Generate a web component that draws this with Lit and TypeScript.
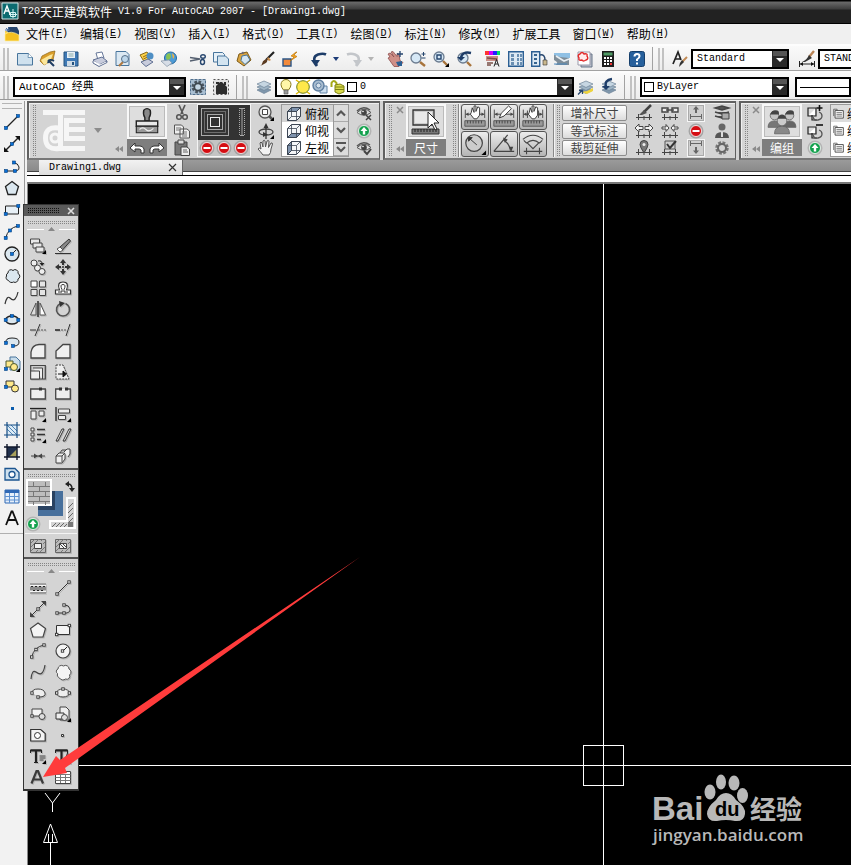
import { LitElement, html, svg, css, SVGTemplateResult, TemplateResult } from "lit";
import { customElement } from "lit/decorators.js";

/* ---------- icon drawing ---------- */

const node = (x: number, y: number) => svg`<rect x=${x - 1.5} y=${y - 1.5} width="3" height="3" fill="#0a6fd6" stroke="#04407e" stroke-width=".6"/>`;
const knob = (x: number, y: number) => svg`<rect x=${x - 1.2} y=${y - 1.2} width="2.4" height="2.4" fill="#fff" stroke="#333" stroke-width=".9"/>`;
const corner = svg`<path d="M16 12v4h-4z" fill="#000"/>`;
const cube = (face: string) => svg`<g stroke="#3c4654" fill="#f4f6f8" stroke-linejoin="round"><path d="M1.5 5.5l4-4h9v9l-4 4h-9z"/><path d=${face} fill="#7f93ad"/><path d="M1.5 5.5h9v9M10.5 5.5l4-4M5.5 1.5v9h9M5.5 10.5l-4 4" fill="none" stroke-width=".8"/></g>`;
const disc = (fill: string, ring: string, mark: SVGTemplateResult) => svg`<circle cx="8" cy="8" r="7.5" fill=${ring}/><circle cx="8" cy="8" r="5.5" fill=${fill} stroke="#fff" stroke-width=".8"/>${mark}`;
const stop = disc("#d40d12", "#a4a4a4", svg`<path d="M4.5 7h7v2h-7z" fill="#fff"/>`);
const up = disc("#12a04c", "#b4b4b4", svg`<path d="M8 4l3.5 4H9.2v3.5H6.8V8H4.5z" fill="#fff"/>`);
const lens = (x: number, y: number, r: number) => svg`<path d=${`M${x + r - 1} ${y + r - 1}L15 15`} stroke="#a8743c" stroke-width="2.4"/><circle cx=${x} cy=${y} r=${r} fill="#d6e8f6" stroke="#6c7c90" stroke-width="1.3"/>`;
const sheets = svg`<g stroke="#6d8296" stroke-width=".7"><path d="M1 11l7-2.5 7 2.5-7 3.5z" fill="#7f97ac"/><path d="M1 8l7-2.5L15 8l-7 3.5z" fill="#9fb5c6"/><path d="M1 5l7-3 7 3-7 3.5z" fill="#c6d6e2"/></g>`;
const eye = svg`<path d="M1 7.5Q8 1 15 7.5Q8 13 1 7.5z" fill="#ddd" stroke="#555"/><path d="M1 6Q7 0 14 5" fill="none" stroke="#555" stroke-width="1.5"/><circle cx="8" cy="7.5" r="2.8" fill="#444"/><circle cx="7" cy="6.5" r=".8" fill="#fff"/>`;
const dimBase = svg`<path d="M2.5 9v6M13.5 9v6M8 11v4M0 12.5h16" stroke="#444" fill="none"/>`;

const icons: Record<string, SVGTemplateResult> = {
  app: svg`<path d="M0 0h16v16H0z" fill="#0c6b70"/><path d="M0 0h16v16H0z" fill="none" stroke="#cfe8e8"/><path d="M2 11L5 3l3 8M3 8h4" fill="none" stroke="#fff" stroke-width="1.4"/><path d="M8.5 9.5h5v4h-5zM11 6v9M7 11.5h8" fill="none" stroke="#d6f4f4"/>`,
  doc: svg`<path d="M1 5h14v9H1z" fill="#fbd34d"/><path d="M4 1h9l2 4v9H4z" fill="#27466e"/><path d="M1 8q6-4 14 1v6H1z" fill="#f4c021" stroke="#fff0a0" stroke-width=".7"/><path d="M2 2l3 3M5 1L3 6M1 4h5" stroke="#4a6ea0"/>`,
  fresh: svg`<path d="M.5 2.5h11l4 4v7.5H.5z" fill="#cfe1ee" stroke="#48759c"/><path d="M11.5 2.5l-.5 4h4.5" fill="#fff" stroke="#48759c" stroke-width=".7"/>`,
  open: svg`<path d="M2 5l8-4 5-1-2 9-9 5-4-4z" fill="#d99e2b" stroke="#8f6615" stroke-width=".7"/><path d="M1 9l9-5 3-1-3 8-6 3z" fill="#fbe79c"/><path d="M8 9l6 6M14 10q-5-3-6 2" stroke="#1f3d63" stroke-width="2" fill="none"/>`,
  save: svg`<path d="M1 1h14v14H1z" fill="#3f79b5" stroke="#24527f"/><path d="M4 1h8v6H4z" fill="#e8f0f6"/><path d="M4 10h8v5H4z" fill="#cfdbe6"/><path d="M5.5 3h5M5.5 5h5" stroke="#8aa"/><path d="M9 11h2v3H9z" fill="#24527f"/>`,
  print: svg`<path d="M4 2l6-1 2 6-6 2z" fill="#fff" stroke="#667799"/><path d="M1 9l9-3 5 4-8 4z" fill="#c8ccdc" stroke="#5f6f92"/><path d="M2 11l6 3.5 6-3" fill="none" stroke="#fff" stroke-width="1.6"/><path d="M1 10v2l6 3.5 8-4v-1.5" fill="none" stroke="#5f6f92"/>`,
  preview: svg`<path d="M1 .5h10l3 3v11H1z" fill="#dbe8f2" stroke="#48759c"/><path d="M8 11l-4 4" stroke="#b07a40" stroke-width="2.2"/><circle cx="10" cy="8" r="3.5" fill="#bcd6ea" stroke="#55708a"/>`,
  publish: svg`<path d="M2 4l7-3 4 6-6 5z" fill="#fbd24a" stroke="#8b6914"/><path d="M5 6l4-2M5.5 8l4-2" stroke="#9a6b10"/><circle cx="12" cy="5" r="3.5" fill="#4f8fc4"/><path d="M3 11l7-3 5 3-7 4.5z" fill="#c8ccdc" stroke="#5f6f92"/>`,
  globe: svg`<circle cx="9.5" cy="7" r="6" fill="#4d9bd6" stroke="#23679d"/><path d="M6 3q4-2 4 2t-4 4q-2-3 0-6z" fill="#86c254"/><path d="M11 2q4 3 1 6z" fill="#f4b13c"/><path d="M0 10l8-1 3 3-5 3.5z" fill="#d7dde6" stroke="#8090a4" stroke-width=".7"/>`,
  cut: svg`<path d="M0 6.5l10 1.5M0 10L10 8" stroke="#556070" stroke-width="1.5"/><ellipse cx="13" cy="5.5" rx="2.3" ry="1.8" fill="none" stroke="#27466e" stroke-width="1.4"/><ellipse cx="12.5" cy="11" rx="2" ry="2.5" fill="none" stroke="#27466e" stroke-width="1.4"/>`,
  copy: svg`<path d="M.5 1.5h9l2 2v7.5H.5z" fill="#e6f0f7" stroke="#48759c"/><path d="M4.5 5h8l3 3v6.5h-11z" fill="#d3e4f0" stroke="#48759c"/>`,
  paste: svg`<path d="M3 3l8-2 4 8-7 6-7-5z" fill="#d9a441" stroke="#7e5b17"/><path d="M6 5l5-1 3 5-5 4.5-4-4z" fill="#d5e6f2" stroke="#48759c"/><path d="M4 3l3-2.5 1.5 2z" fill="#667"/>`,
  brush: svg`<path d="M15 1L7 9" stroke="#222" stroke-width="2.2"/><path d="M9 6l3 3-2 1-2-2z" fill="#c88a4a"/><path d="M8 8q1 3-2 4.5T1 15q2-1 2.5-3.5T8 8z" fill="#5a3a20"/>`,
  block: svg`<path d="M1 8h8v7H1z" fill="#f28a3c" stroke="#2b5586" stroke-width="1.4"/><path d="M14 1L9 5l3 1-4 4 7-4.5-3-1.5 3-3z" fill="#f6a21c" stroke="#b36d00" stroke-width=".6"/>`,
  undo: svg`<path d="M6 15Q0 6 7 3.5q5-1.5 8 0" fill="none" stroke="#1d3c68" stroke-width="2.6"/><path d="M0 9h9l-4.5 6.5z" fill="#1d3c68"/>`,
  redo: svg`<path d="M10 15Q16 6 9 3.5Q5 2 1 3.5" fill="none" stroke="#c3c6ca" stroke-width="2.6"/><path d="M16 9H7l4.5 6.5z" fill="#c3c6ca"/>`,
  pan: svg`<path d="M1 3l2-1 4 4-3-5 2-.5 4 5 0-3 2 1 1 6 3 2-4 4H7L1 7l2-1z" fill="#cf8f88" stroke="#8d4c4c" stroke-width=".8"/><path d="M9 11l6-1v5h-4z" fill="#2b5f93"/><path d="M13 0v6M10 3h6" stroke="#27466e" stroke-width="1.3"/>`,
  zoomRt: svg`${lens(6, 7, 5)}<path d="M13.5 1v4M11.5 3h4M11.5 7h4" stroke="#27466e"/>`,
  zoomWin: svg`${lens(6, 6, 5)}<path d="M4 4h4v4H4z" fill="none" stroke="#27466e" stroke-width="1.4"/>${corner}`,
  zoomPrev: svg`${lens(7, 7, 5)}<path d="M15 2Q6 0 5 7" fill="none" stroke="#1d3c68" stroke-width="2.5"/><path d="M1 6h8l-4 4z" fill="#1d3c68"/>`,
  props: svg`<path d="M0 0h4v4H0z" fill="#f33"/><path d="M4 0h4v4H4z" fill="#c0f"/><path d="M8 0h4v4H8z" fill="#22f"/><path d="M12 0h3v4h-3z" fill="#0d6"/><path d="M1 5h12v5H1z" fill="#c98f88"/><path d="M2 7l10 1M2 12h6M2 14h4" stroke="#7a5048" stroke-width="1.5"/><path d="M9 15.500l2.500-7 2.500 7M10 13h3" fill="none" stroke="#222"/>`,
  center: svg`<path d="M.7.7h14.6v14.6H.7z" fill="#dde9f3" stroke="#2b5f93" stroke-width="1.4"/><path d="M3 3h3v3H3zM3 7h3v3H3zM3 11h3v3H3zM9 3h2v3H9zM12 3h2v3h-2zM9 7h2v3H9zM12 7h2v3h-2zM9 11h2v3H9zM12 11h2v3h-2z" fill="#6a8fb2"/>`,
  palettes: svg`<path d="M.7.7h8v14.6h-8z" fill="#dde9f3" stroke="#2b5f93" stroke-width="1.4"/><path d="M3 3h3v2H3zM3 7h3v2H3zM3 11h3v2H3z" fill="#36648f"/><path d="M9 4q5-1 5 5" fill="none" stroke="#27466e" stroke-width="1.5"/><path d="M12 9h4v5h-4z" fill="#cbb88d" stroke="#333" stroke-width=".6"/>`,
  sheet: svg`<path d="M0 2h16v5H0z" fill="#8fc0e4"/><path d="M0 4l6 2 9 1v7H1q5-2-1-5z" fill="#7f8d98"/><path d="M2 5l8 5 5-2" stroke="#e8eef2" fill="none" stroke-width="1.6"/><path d="M0 13h13" stroke="#4a88bd"/>`,
  markup: svg`<path d="M4 3h11v13H4z" fill="#b9bfca" stroke="#667488"/><path d="M1 1h12v13H1z" fill="#fff" stroke="#99a"/><path d="M3 3q2-3 4 0 4-1 3 2 2 3-1 4-3 2-4 0-4 1-3-2-2-3 1-4z" fill="#ffecec" stroke="#e22a2a" stroke-width="1.4"/>`,
  calc: svg`<path d="M2 0h12v16H2z" fill="#1d1d1d"/><path d="M3.5 1.5h9v3h-9z" fill="#4f9a64"/><path d="M4 6h2v2H4zM7 6h2v2H7zM10 6h2v2h-2zM4 9h2v2H4zM7 9h2v2H7zM10 9h2v2h-2zM4 12h2v2H4zM7 12h2v2H7z" fill="#fff"/><path d="M10 12h2v2h-2z" fill="#e33"/>`,
  help: svg`<rect x=".5" y=".5" width="15" height="15" rx="2" fill="#27609c" stroke="#163f6b"/><path d="M5.5 5.5Q5.5 3 8 3t2.5 2.3Q10.5 7 8 8.500V10" fill="none" stroke="#fff" stroke-width="2"/><path d="M7 11.500h2v2H7z" fill="#fff"/>`,
  textStyle: svg`<path d="M1 13L6 1l3 8M3 8h6" fill="none" stroke="#222" stroke-width="1.7"/><path d="M15 6l-5 5" stroke="#c28a54" stroke-width="2"/><path d="M10 9l2 2-5 5q0-4 3-7z" fill="#333"/>`,
  dimStyle: svg`<path d="M.5 10v6M15.5 10v6M0 13h16" stroke="#222"/><path d="M1 13l3-2v4zM15 13l-3-2v4z" fill="#111"/><path d="M15 0l-5 6" stroke="#b98456" stroke-width="2.4"/><path d="M10 4l3 3-7 4H3q5-2 7-7z" fill="#333"/>`,
  gear: svg`<path d="M.5.5h15v15H.5z" fill="#a9bfd2" stroke="#506f8d" stroke-dasharray="3 1"/><circle cx="8" cy="8" r="5" fill="none" stroke="#4a5560" stroke-width="3" stroke-dasharray="2.5 1.4"/><circle cx="8" cy="8" r="3.7" fill="#c4d6e4" stroke="#3d474f" stroke-width="1.8"/>`,
  house: svg`<path d="M.5.5h15v15H.5z" fill="#e2e2e2" stroke="#555" stroke-dasharray="2 2"/><path d="M3 15V7l4-4h2l5 5v7z" fill="#2d2d2d"/><path d="M3 3h3v2H3zM11 3h2v3h-2z" fill="#2d2d2d"/>`,
  layers: sheets,
  layerPrev: svg`<g>${sheets}</g><path d="M3 13l6-1 6-3v3l-6 3z" fill="#efd43c"/><path d="M0 15.5l4-4M1 11.5h3.5V15" stroke="#27466e" fill="none" stroke-width="1.3"/>`,
  layerState: svg`<g>${sheets}</g><path d="M11 0Q3 1 5 8" fill="none" stroke="#1d3c68" stroke-width="2.4"/><path d="M1 7h8l-4 4z" fill="#1d3c68"/>`,
  bulb: svg`<path d="M5.5 11Q3 8 3 5.5a5 5 0 0110 0Q13 8 10.5 11z" fill="#fff6a8" stroke="#8a7a20"/><path d="M6 11h4v4H6z" fill="#999" stroke="#555" stroke-width=".6"/>`,
  sun: svg`<path d="M1 1l3 2M15 1l-3 2M1 15l3-2M15 15l-3-2" stroke="#e0b800" stroke-width="1.5"/><circle cx="8" cy="8" r="6.3" fill="#ffe84a" stroke="#6d7f20"/>`,
  sunVp: svg`<path d="M8 7h7v7H8z" fill="#cddff0" stroke="#6384a6"/><circle cx="6.5" cy="6.5" r="5.5" fill="#a9bdd0" stroke="#5f7fa1" stroke-width="1.4"/><circle cx="6.5" cy="6.5" r="2.5" fill="#d7e2ec" stroke="#5f7fa1"/>`,
  lock: svg`<path d="M2.5 8V4q2-4 5 0v3" fill="none" stroke="#a5a818" stroke-width="2"/><path d="M6 6l5-1 4 2v6l-5 2-4-2z" fill="#d8da4c" stroke="#7f8213"/><path d="M6 8h9M6 10.5h9" stroke="#7f8213"/>`,
  /* draw toolbar */
  line: svg`<path d="M2 14L14 2" stroke="#222" stroke-width="1.2"/>${node(2, 14)}${node(14, 2)}`,
  xline: svg`<path d="M1 15L15 1" stroke="#222" stroke-width="1.5"/><path d="M0 16v-5l5 5zM16 0h-5l5 5z" fill="#111"/>${node(8, 8)}`,
  pline: svg`<path d="M2 13h10q4-1 3-4-1-4-5-4" fill="none" stroke="#222"/>${node(2, 13)}${node(11, 13)}${node(10, 4.5)}`,
  poly: svg`<path d="M8 1.5l6.5 5-2.5 8H4l-2.5-8z" fill="#dbe7ef" stroke="#222" stroke-width="1.3"/>`,
  rect: svg`<path d="M1.5 4h13v8h-13z" fill="#e8f0f6" stroke="#222"/>${node(1.7, 12)}${node(14.3, 4)}`,
  arc: svg`<path d="M1.7 14Q4 4 14 2" fill="none" stroke="#222"/>${node(1.7, 14)}${node(6, 6.5)}${node(14, 2)}`,
  circle: svg`<circle cx="8" cy="8" r="7" fill="#dbe7ef" stroke="#222" stroke-width="1.3"/><path d="M8 8l4-4" stroke="#222"/>${node(8, 8)}`,
  cloud: svg`<path d="M4 5a3 3 0 015-2.500 3 3 0 015 3 3 3 0 010 5.500 3 3 0 01-4.500 3 3.500 3.500 0 01-5-1.500 3 3 0 01-2-4.500A2.500 2.500 0 014 5z" fill="#dbe7ef" stroke="#222"/>`,
  spline: svg`<path d="M1 14Q3 5 6 8t5 1 3-7" fill="none" stroke="#333" stroke-width="1.2"/>`,
  ellipse: svg`<ellipse cx="8" cy="8" rx="6.5" ry="4" fill="#dbe7ef" stroke="#222" stroke-width="1.3"/>${node(8, 4)}${node(1.7, 8)}${node(14.3, 8)}`,
  earc: svg`<path d="M2 9Q1 4 8 4t7 4-5 4" fill="#dbe7ef" stroke="#222"/>${node(2, 9)}${node(9, 12)}`,
  insert: svg`<path d="M6 1h6l4 4v9H6z" fill="#c8dcea" stroke="#48759c"/><path d="M2 5h7v6H2z" fill="#ffe98a" stroke="#4c5a30"/><circle cx="10" cy="11" r="3.5" fill="#ffe98a" stroke="#4c5a30"/>${node(2, 13)}${corner}`,
  make: svg`<path d="M2 3h8v6H2z" fill="#ffe98a" stroke="#333"/><circle cx="11" cy="10.5" r="3.5" fill="#ffe98a" stroke="#333"/>${node(2, 9)}`,
  point: svg`<path d="M7 7h3v3H7z" fill="#0a5cad"/>`,
  hatch: svg`<path d="M3 3h10v10H3z" fill="#dcebf6"/><path d="M3 7l6 6M3 3l10 10M7 3l6 6" stroke="#4f84b4"/><path d="M0 3h16M0 13h16M3 0v16M13 0v16" stroke="#154d84" stroke-width="1.2"/>`,
  gradient: svg`<path d="M3 3h10v10H3z" fill="#20304c"/><path d="M13 5v8H5z" fill="#a8a05a"/><path d="M0 3h16M0 13h16M3 0v16M13 0v16" stroke="#10182c" stroke-width="1.4"/>`,
  region: svg`<path d="M1 2.5h10l4 4V14H1z" fill="#cfe1ee" stroke="#1d5690" stroke-width="1.3"/><circle cx="8" cy="8.5" r="3" fill="#fff" stroke="#1d5690" stroke-width="1.3"/>`,
  table: svg`<path d="M1 2h14v13H1z" fill="#e6effa" stroke="#2f68b5"/><path d="M1 2h14v3H1z" fill="#2f68b5"/><path d="M1 8.500h14M1 12h14M5.500 5v10M10.500 5v10" stroke="#5c90d0"/>`,
  mtext: svg`<path d="M2 15L7.5 1.5h1L14 15M4.2 10h7.6" fill="none" stroke="#111" stroke-width="1.8"/>`,
  /* grey palette */
  gCopy: svg`<g fill="#e8e8e8" stroke="#444"><path d="M.5 1h9v5h-9z"/><path d="M3 5h9v5H3z"/><path d="M6 9h8v5H6z"/></g>${corner}`,
  gErase: svg`<path d="M14 1l1.500 2-8 9H4l1-3z" fill="#888" stroke="#333"/><path d="M2 11l3-2 3 3-3 2z" fill="#fff" stroke="#555"/><path d="M0 15.500h16" stroke="#333"/>`,
  gCopy2: svg`<g fill="#eee" stroke="#444"><circle cx="4" cy="4" r="3"/><circle cx="7.5" cy="9" r="3"/><circle cx="12" cy="12.5" r="3"/></g><path d="M8 2q4-1 4 3" fill="none" stroke="#222"/><path d="M9.500 4h5L12 7z" fill="#222"/>`,
  gMove: svg`<path d="M8 0l3 4H9v2H7V4H5zM8 16l3-4H9v-2H7v2H5zM0 8l4-3v2h2v2H4v2zM16 8l-4-3v2h-2v2h2v2z" fill="#333"/><path d="M7 7h2v2H7z" fill="#555"/>`,
  gArray: svg`<g fill="#e4e4e4" stroke="#444"><path d="M1 1h6v6H1z" fill="#fff"/><path d="M9.5 1h6v6h-6zM1 9.5h6v6H1zM9.5 9.5h6v6h-6z"/></g>`,
  gOffset: svg`<path d="M.5 14v-4h4Q1.500 2 8 2t3.500 8h4v4z" fill="#fff" stroke="#333" stroke-width="1.2"/><path d="M3 12h4V9.500Q4.500 4.500 8 4.500T9 9.500V12h4" fill="none" stroke="#333"/>`,
  gMirror: svg`<path d="M6 2v12H.5z" fill="#ddd" stroke="#555"/><path d="M10 2v12h5.500z" fill="#fff" stroke="#555"/><path d="M8 0v16" stroke="#222" stroke-width="1.4"/>`,
  gRotate: svg`<path d="M5.500 2.500a6.500 6.500 0 105 0" fill="none" stroke="#555" stroke-width="1.600"/><path d="M4 0l6 2-5 4z" fill="#333"/>`,
  gTrim: svg`<path d="M0 8h6" stroke="#333"/><path d="M8 8h8" stroke="#555" stroke-dasharray="2 1"/><path d="M5 14L10 2" stroke="#333"/>`,
  gExtend: svg`<path d="M0 8h5" stroke="#222" stroke-width="1.5"/><path d="M6 8h6" stroke="#555" stroke-dasharray="2 1"/><path d="M11 14L15 2" stroke="#333"/>`,
  gFillet: svg`<path d="M1 15V9q1-7 8-7.5h6V15z" fill="#f0f0f0" stroke="#444" stroke-width="1.3"/>`,
  gChamfer: svg`<path d="M1 15V8l7-6.5h7V15z" fill="#f0f0f0" stroke="#444" stroke-width="1.3"/>`,
  gScale: svg`<path d="M.7 1.500h14.600V15H.7z" fill="#ccc" stroke="#444" stroke-width="1.200"/><path d="M.7 7h8.800v8H.7zM3 4h9.500v11" fill="#eee" stroke="#444"/>`,
  gStretch: svg`<path d="M1 1h7l6 14H1z" fill="#eee" stroke="#444" stroke-dasharray="2 1"/><path d="M3 10h7M8 7l3.500 3L8 13z" stroke="#111" fill="#111"/>`,
  gBreak1: svg`<path d="M.7 4h14.6v10H.7z" fill="#eee" stroke="#444" stroke-width="1.3"/><path d="M9 2.5h3v3H9z" fill="#333"/>`,
  gBreak: svg`<path d="M5 4H.7v10h14.6V4H11" fill="#eee" stroke="#444" stroke-width="1.3"/><path d="M4 2.5h3v3H4zM10 2.5h3v3h-3z" fill="#333"/>`,
  gAlignT: svg`<path d="M0 2.500h16" stroke="#222" stroke-width="1.3"/><path d="M1 5h5v8H1zM9 5h5v5H9z" fill="#eee" stroke="#444"/>${corner}`,
  gAlignL: svg`<path d="M1 1v14" stroke="#222" stroke-width="1.3"/><path d="M3.500 3h11v4h-11zM3.500 9.500h7v4h-7z" fill="#eee" stroke="#444"/>${corner}`,
  gList: svg`<path d="M1 1h3v3H1zM1 6h3v3H1zM1 11h3v3H1z" fill="#eee" stroke="#444"/><path d="M7 2.500h8M7 7.500h8M7 12.500h4" stroke="#333" stroke-width="1.5"/>${corner}`,
  gLines: svg`<path d="M1 14L7 2h2L3 14zM8 14l6-12h2l-6 12z" fill="#eee" stroke="#333"/>`,
  gJoin: svg`<path d="M1 8h14" stroke="#444"/><path d="M4 5.500l4 2.500-4 2.500zM12 5.500L8 8l4 2.500z" fill="#444"/>`,
  gExplode: svg`<g fill="#eee" stroke="#444"><path d="M1 8l3-3h6v6l-3 4H1z"/><path d="M9 4l3-3h3v5l-2 3"/></g><path d="M1 8h6v6M7 8l3-3M5 5l2-3h4" fill="none" stroke="#444"/>`,
  gMline: svg`<path d="M0 5h16v7H0z" fill="#f4f4f4"/><path d="M0 4h16M0 13h16" stroke="#777"/><path d="M1 10.500v-4h2v4h2v-4h2v4h2v-4h2v4h2v-4h2v4" fill="none" stroke="#222"/>`,
  gLine: svg`<path d="M2 14L14 2" stroke="#333"/>${knob(2, 14)}${knob(14, 2)}`,
  gXline: svg`<path d="M1 15L15 1" stroke="#333"/><path d="M0 16v-5l5 5zM16 0h-5l5 5z" fill="#444"/>${knob(8, 8)}`,
  gPline: svg`<path d="M2 12h10q4-1 3-4-1-4-5-4" fill="none" stroke="#333"/>${knob(2, 12)}${knob(9, 12)}${knob(9, 4)}`,
  gPoly: svg`<path d="M8 1l7.500 5.500L13 15H3L.5 6.500z" fill="#f4f4f4" stroke="#444" stroke-width="1.200"/>`,
  gRect: svg`<path d="M1.5 3.5h13v9h-13z" fill="#f4f4f4" stroke="#333"/>${knob(1.7, 12.5)}${knob(14.3, 3.5)}`,
  gArc: svg`<path d="M1.7 14Q4 4 14 2" fill="none" stroke="#333"/>${knob(1.7, 14)}${knob(6, 6.5)}${knob(14, 2)}`,
  gCircle: svg`<circle cx="8" cy="8" r="7" fill="#f4f4f4" stroke="#444" stroke-width="1.2"/><path d="M8 8l4-4" stroke="#222"/>${knob(7.5, 8)}`,
  gSpline: svg`<path d="M1 15Q2 5 6 8t6 1 3-8" fill="none" stroke="#444" stroke-width="1.2"/>`,
  gCloud: svg`<path d="M3 5a3.500 3.500 0 015.500-3 3.500 3.500 0 015.500 3 3.500 3.500 0 01.500 6 3 3 0 01-4 4 4 4 0 01-6-1 3.500 3.500 0 01-2-4.500A2.500 2.500 0 013 5z" fill="#f4f4f4" stroke="#555"/>`,
  gEarc: svg`<path d="M2 8Q2 4 8 4t7 4-6 4" fill="#eee" stroke="#444"/>${knob(2, 8)}${knob(8, 12)}`,
  gEllipse: svg`<ellipse cx="8" cy="8" rx="6.5" ry="4" fill="#eee" stroke="#444"/>${knob(8, 4)}${knob(1.7, 8)}${knob(14.3, 8)}`,
  gMake: svg`<path d="M2 3h10v7H2z" fill="#f4f4f4" stroke="#444"/><circle cx="12" cy="10.5" r="3" fill="#ddd" stroke="#444"/>${knob(2, 10)}`,
  gInsert: svg`<path d="M5 1h6l3 3v10H5z" fill="#eee" stroke="#444"/><path d="M1 7h8v6H1z" fill="#eee" stroke="#333"/><circle cx="9.5" cy="11.5" r="3" fill="#ddd" stroke="#444"/>${corner}`,
  gRegion: svg`<path d="M.7 2.5h10l4.5 4V14H.7z" fill="#f4f4f4" stroke="#333" stroke-width="1.2"/><circle cx="7.5" cy="8.5" r="3" fill="#fff" stroke="#333"/>`,
  gPoint: svg`<path d="M6.5 7.5h2v2h-2z" fill="#eee" stroke="#333"/>`,
  gText: svg`<path d="M.500 5V2h11v3M4 14.500h4" fill="none" stroke="#222"/><path d="M.500 2.500h11M6 2v12" stroke="#222" stroke-width="2.200"/><path d="M9.500 8h6M9.500 10h6M9.500 12h4" stroke="#444"/>${corner}`,
  gTextA: svg`<path d="M.500 5V2h12v3M4 14.500h5" fill="none" stroke="#222"/><path d="M.500 2.500h12M6.500 2v12" stroke="#222" stroke-width="2.200"/><path d="M10 12l2.500-7 2.500 7" fill="none" stroke="#333"/>${corner}`,
  gA: svg`<path d="M1.500 14.500L6.500 2h1.500L13 14.500M3.500 10.500h8" fill="none" stroke="#3c3c3c" stroke-width="2.200"/>`,
  gTable: svg`<path d="M.5 2.5h15v12H.5z" fill="#fff" stroke="#444"/><path d="M.5 5.5h15M.5 8.5h15M.5 11.5h15M5.5 5v9M10.5 5v9" stroke="#777"/>`,
  gHatchA: svg`<path d="M.5 1.5h15v13H.5z" fill="#bbb" stroke="#666"/><path d="M1 5l4-4M1 9l8-8M1 13l3-3M11 3l2-2M6 14l2-2M10 14l5-5M13 6l2-2" stroke="#777"/><path d="M4.5 5.5h7v5h-7z" fill="#f2f2f2" stroke="#444"/>`,
  gHatchB: svg`<path d="M.5 1.5h15v13H.5z" fill="#bbb" stroke="#666"/><path d="M1 5l4-4M1 9l8-8M1 13l3-3M11 3l2-2M6 14l2-2M10 14l5-5M13 6l2-2" stroke="#777"/><path d="M4.5 5.5h7v5h-7z" fill="#f2f2f2" stroke="#444"/><path d="M5 6l5 5M8 6l3 3" stroke="#444"/>`,
  /* ribbon */
  rCut: svg`<path d="M5 0l4 9M11 0L7 9" stroke="#555" stroke-width="1.7"/><circle cx="5" cy="12" r="2.3" fill="none" stroke="#555" stroke-width="1.5"/><circle cx="11" cy="12" r="2.3" fill="none" stroke="#555" stroke-width="1.5"/>`,
  rCopy: svg`<path d="M.5 2h7l2 2v7h-9zM6 6h7l2.500 2v7H6z" fill="#eee" stroke="#555"/><path d="M2 5h5M2 7h4M8 9h5M8 11h5M8 13h5" stroke="#777"/>`,
  rPaste: svg`<path d="M1 2h12v13H1z" fill="#777" stroke="#444"/><path d="M4 0h6v4H4z" fill="#ddd" stroke="#444"/><path d="M7 7h6l2.5 2v6.5H7z" fill="#eee" stroke="#444"/><path d="M9 10h4M9 12h5" stroke="#666"/>`,
  rZoom: svg`<path d="M11 11l4 4" stroke="#555" stroke-width="2.5"/><circle cx="7" cy="7" r="6" fill="#e8e8e8" stroke="#555" stroke-width="1.3"/><path d="M4.5 4.5h5v5h-5z" fill="#fff" stroke="#444"/>${corner}`,
  rOrbit: svg`<ellipse cx="8" cy="9" rx="7" ry="3" fill="none" stroke="#444" stroke-width="1.3"/><path d="M8 16V3" stroke="#333" stroke-width="1.300"/><path d="M5.500 5L8 0l2.500 5zM5 9v5l5-2.500z" fill="#333"/>${corner}`,
  rHand: svg`<path d="M5 15q-3-4-5-6 1-2 3 0L2 3q1-2 2 0l1 4 0-6q1.500-1.500 2 0l.5 6L9 1q1.500-1 2 0l-.5 6.500L13 3q1.500-.5 1.500 1L13 9q0 4-2 6z" fill="#f2f2f2" stroke="#555"/>`,
  rTop: cube("M1.5 5.5l4-4h9l-4 4z"),
  rBottom: cube("M1.5 14.5l4-4h9l-4 4z"),
  rLeft: cube("M1.5 5.5l4-4v9l-4 4z"),
  rEyeX: svg`${eye}<path d="M10 10l5 5M15 10l-5 5" stroke="#444" stroke-width="1.5"/>`,
  rEyeV: svg`${eye}<path d="M8 11l3 3 4-5" stroke="#444" stroke-width="2" fill="none"/>`,
  rStop: stop,
  rUp: up,
  chevUp: svg`<path d="M4 10.5l4-4 4 4" fill="none" stroke="#555" stroke-width="2.2"/>`,
  chevDown: svg`<path d="M4 6l4 4 4-4" fill="none" stroke="#555" stroke-width="2.2"/>`,
  chevMenu: svg`<path d="M3 4h10M4 8l4 4 4-4" fill="none" stroke="#555" stroke-width="2"/>`,
  rUndo: svg`<path d="M1 8l5-5v3h5q3 0 4 3v4h-3v-3q-1-1-2-1H6v3z" fill="#fff" stroke="#333"/>`,
  rRedo: svg`<path d="M15 8l-5-5v3H5Q2 6 1 9v4h3v-3q1-1 2-1h4v3z" fill="#fff" stroke="#333"/>`,
  dEdit: svg`<path d="M15 0L8 7" stroke="#444" stroke-width="2.5"/><path d="M8 5l3 3-5 2H3z" fill="#555"/>${dimBase}`,
  dLink: svg`<path d="M0 3h6v4H0zM10 3h6v4h-6z" fill="#eee" stroke="#444" stroke-width="1.4"/><path d="M4 5h8" stroke="#444" stroke-width="1.4"/>${dimBase}`,
  dUp: svg`<path d="M8 1L5 4.5h2V8h2V4.5h2z" fill="#666"/><path d="M2.5 9v5M13.5 9v5M2 11.5h12" stroke="#666"/>`,
  dDown: svg`<path d="M8 14L5 10.5h2V7h2v3.5h2z" fill="#666"/><path d="M2.5 1v5M13.5 1v5M2 3.5h12" stroke="#666"/>`,
  dOut: svg`<path d="M-1 5l4-4v2.500h4v3H3V9zM17 5l-4-4v2.500H9v3h4V9z" fill="#f2f2f2" stroke="#444"/>${dimBase}`,
  dIn: svg`<path d="M7 5L4 1.500v2.500H0v2h4v2.500zM9 5l3-3.500v2.500h4v2h-4v2.500z" fill="#f2f2f2" stroke="#444"/>${dimBase}`,
  dPin: svg`${dimBase}<path d="M8 13Q4 7 4 4.5a4 4 0 018 0Q12 7 8 13z" fill="#777" stroke="#444"/><circle cx="8" cy="4.5" r="1.5" fill="#eee"/>`,
  dCheck: svg`<path d="M3 1h10v8H3z" fill="#ccc" stroke="#555"/>${dimBase}<path d="M5 4l3 4 6-7" fill="none" stroke="#333" stroke-width="2"/>`,
  dStack: svg`<path d="M1 3l7-2 7 2-7 2zM1 7l7 2 7-2M1 11l7 2 7-2" fill="#555" stroke="#444" stroke-width="1.4"/><path d="M8 8h7v6H8z" fill="#aaa" stroke="#444"/>`,
  dUser: svg`<circle cx="8" cy="4" r="3.5" fill="#666"/><path d="M1 15q0-6 7-6t7 6z" fill="#555"/><path d="M7 9h2v5H7z" fill="#ddd"/>`,
  dGear: svg`<circle cx="8" cy="8" r="5" fill="none" stroke="#777" stroke-width="3.5" stroke-dasharray="2.6 1.3"/><circle cx="8" cy="8" r="4" fill="none" stroke="#666" stroke-width="2"/>`,
  gAdd: svg`<path d="M1 3h8v8H1zM5 9v6h5" fill="#ddd" stroke="#222" stroke-width="1.2"/><path d="M2 10l6-6v6z" fill="#fff"/><path d="M12 7q3 1 3 4t-4 4-5-3" fill="none" stroke="#555" stroke-width="1.3"/><path d="M12.500 0v6M9.500 3h6" stroke="#111" stroke-width="1.600"/>`,
  gSub: svg`<path d="M1 4h8v7H1zM5 9v6h5" fill="#ddd" stroke="#222" stroke-width="1.2"/><path d="M2 10l6-5v5z" fill="#fff"/><path d="M12 7q3 1 3 4t-4 4-5-3" fill="none" stroke="#555" stroke-width="1.3"/><path d="M9 2h7" stroke="#111" stroke-width="1.600"/>`,
  listItem: svg`<path d="M3 3h12v11H3z" fill="#fff" stroke="#444" stroke-width="1.3"/><path d="M6 3V1H1v10M5 6h8M5 8.5h8M5 11h8" fill="none" stroke="#444"/>`,
};

const bigIcons: Record<string, SVGTemplateResult> = {
  stamp: svg`<path d="M11 3q3-3 6 0 1 4-1 7v3h-4v-3q-2-3-1-7z" fill="#888" stroke="#222" stroke-width="1.3"/><path d="M4 13h20v5H4z" fill="#e8e8e8" stroke="#222" stroke-width="1.3"/><path d="M4 18h20v6H4z" fill="#999" stroke="#222"/><path d="M7 21q3-3 6 0t7-1" stroke="#eee" fill="none"/>`,
  dims: svg`<path d="M2 3h21v15H2z" fill="#ccc" stroke="#333" stroke-width="1.3"/><path d="M4 5h17v11H4z" fill="#e9e9e9"/><path d="M1 22h27v5H1z" fill="#777" stroke="#333"/><path d="M4 22v3M7 22v3M10 22v3M13 22v3M16 22v3M19 22v3M22 22v3M25 22v3" stroke="#222"/><path d="M17 5v16l4-4 3 6 2-1-3-6h5z" fill="#fff" stroke="#222"/>`,
  people: svg`<g stroke="#666" stroke-width=".8"><path d="M1 19q0-6 6-6t6 6z" fill="#777"/><circle cx="7" cy="8" r="4" fill="#c4c4c4"/><path d="M15 19q0-6 6-6t6 6z" fill="#666"/><circle cx="21" cy="8" r="4" fill="#c4c4c4"/><path d="M7 25q0-7 7-7t7 7z" fill="#888"/><circle cx="14" cy="13" r="4.5" fill="#ccc"/></g><path d="M3 7q1-4 5-4t3 4zM17 7q1-4 5-4t3 4zM10 11q1-4 4-4t4 4z" fill="#444"/>`,
};

const rulerStrip = svg`<path d="M2 17h22v6H2z" fill="#999" stroke="#555"/><path d="M5 17v3M8 17v3M11 17v3M14 17v3M17 17v3M20 17v3" stroke="#444"/><path d="M2.5 5v9M23.5 5v9M3 10h20" stroke="#444"/><path d="M3 10l3-2v4zM23 10l-3-2v4z" fill="#444"/>`;
const pointer = svg`<path d="M10 3l2 5V1h2v6l2-5 2 1v8l-3 4h-3L8 10l1-2z" fill="#fff" stroke="#333"/>`;
const tileIcons: SVGTemplateResult[] = [
  svg`${rulerStrip}${pointer}`,
  svg`${rulerStrip}<path d="M8 14l2-5 8-8 3 3-8 8z" fill="#fff" stroke="#333"/>`,
  svg`${rulerStrip}<path d="M7 6v8M19 6v8" stroke="#444"/>${pointer}`,
  svg`<circle cx="12" cy="12" r="9" fill="#ccc" stroke="#444" stroke-width="1.3"/><path d="M7 7l8 7M6 6h4l-4 4z" stroke="#333" fill="#333"/><path d="M25 20v5h-5z" fill="#000"/>`,
  svg`<path d="M2 21h22M2 21L17 3M13 9q6 4 7 11" fill="none" stroke="#444" stroke-width="1.3"/><path d="M12 6l5 2-3 4zM18 16h5l-2 5z" fill="#444"/>`,
  svg`<path d="M2 8Q13-1 24 8M6 12q7-6 14 0M3 9l3 3M23 9l-3 3M7 12l6 6 6-6M3 21h20M6 17v7M20 17v7" fill="none" stroke="#444" stroke-width="1.2"/>`,
];

const icon = (name: string): TemplateResult => html`<svg class="i16" viewBox="0 0 16 16" aria-hidden="true">${icons[name]}</svg>`;
const tool = (name: string, cls = "tool"): TemplateResult => html`<button class=${cls} type="button" aria-label=${name}>${icon(name)}</button>`;

const shared = css`
  :host { box-sizing: border-box; }
  *, *::before, *::after { box-sizing: border-box; }
  button, select {
    margin: 0; padding: 0; border: 0; border-radius: 0; background: none; color: inherit;
    font: inherit; appearance: none;
  }
  button { display: flex; align-items: center; justify-content: center; }
  .i16 { display: block; width: 16px; height: 16px; flex: none; overflow: visible; }
  .dots {
    background-image: conic-gradient(#858585 25%, transparent 0);
    background-size: 2px 2px;
  }
  .cjk { font: 12px/16px "Noto Sans CJK SC", sans-serif; }
  .mono { font: 10px/16px "Liberation Mono", "Noto Sans CJK SC", monospace; }
`;

/* ---------- ribbon ---------- */

@customElement("cad-ribbon")
class CadRibbon extends LitElement {
  static styles = [shared, css`
    :host { display: flex; gap: 3px; height: 59px; overflow: hidden; background: #d4d4d4; }
    .panel {
      display: flex; flex: none; padding: 1px 0 1px 3px; background: #d4d4d4;
      border: 2px solid #606060; border-right-width: 1px; border-bottom-color: #777; height: 59px;
      box-shadow: inset 1px 1px #eee;
    }
    .panel.last { flex: 1; }
    .grip { width: 5px; height: 52px; margin-top: 1px; }
    .logo { display: flex; justify-content: center; align-items: center; width: 55px; }
    .logo svg { width: 43px; height: 42px; }
    .drop { display: flex; align-items: center; justify-content: center; width: 12px; }
    .fold { display: flex; flex-direction: column; justify-content: space-between; align-items: center; width: 13px; padding: 2px 0 4px; }
    .fold.wide { width: 23px; padding-left: 7px; }
    .fold svg { width: 8px; height: 8px; }
    .big { display: flex; flex-direction: column; width: 40px; }
    .picture { height: 35px; width: 40px; border: 2px solid #f8f8f8; box-shadow: inset 0 0 0 1px #bbb; background: #dedede; flex: none; }
    .picture svg { width: 30px; height: 30px; }
    .caption { display: flex; flex: 1; justify-content: center; align-items: center; background: #7e7e7e; color: #fff; margin-bottom: 1px; }
    .pair { display: flex; flex: 1; justify-content: space-around; background: #7e7e7e; margin-bottom: 1px; }
    .col { display: flex; flex-direction: column; align-items: center; width: 26px; }
    .col.mid { width: 30px; }
    .col button { height: 18px; width: 18px; }
    .col .raised { border: 1px solid #f6f6f6; background: #d0d0d0; outline: 1px solid #aaa; outline-offset: -2px; }
    .dark { width: 54px; display: flex; flex-direction: column; border: 1px solid #f4f4f4; }
    .dark > svg { width: 52px; height: 35px; display: block; background: #333; }
    .stops { display: flex; flex: 1; justify-content: space-around; align-items: center; background: #c4c4c4; }
    .views { display: flex; width: 68px; border: 1px solid #999; background: #fff; }
    .views ul { list-style: none; margin: 0; padding: 0; flex: 1; }
    .views li { display: flex; align-items: center; gap: 3px; height: 17px; padding-left: 4px; }
    .views li.on { background: #d3d3d3; }
    .scroll { display: flex; flex-direction: column; width: 15px; border-left: 1px solid #999; background: #dcdcdc; }
    .scroll button { flex: 1; border-bottom: 1px solid #aaa; overflow: hidden; }
    .split { width: 11px; display: flex; justify-content: flex-end; gap: 2px; margin: 0 2px; }
    .split .grip { width: 4px; }
    .split i { width: 1px; background: #888; box-shadow: 1px 0 #f4f4f4; }
    .tiles { display: grid; grid-template-columns: repeat(3, 28px); grid-auto-rows: 26px; gap: 1px; height: 54px; }
    .tiles button { border: 1px solid #555; border-radius: 3px; background: linear-gradient(#ececec, #b4b4b4); }
    .tiles svg { width: 26px; height: 24px; }
    .words { display: flex; flex-direction: column; justify-content: space-between; width: 65px; padding: 1px 0; margin-right: 4px; }
    .words button { height: 16px; border: 1px solid #8c8c8c; border-radius: 2px; background: linear-gradient(#fff, #dcdcdc); color: #444; }
    .groups { flex: 1; margin: 0 0 0 2px; padding: 0; list-style: none; background: #fff; border: 1px solid #999; border-right: 0; overflow: hidden; }
    .groups li { display: flex; align-items: center; gap: 3px; height: 17px; padding-left: 2px; white-space: nowrap; }
    .groups .i16 { width: 11px; height: 12px; }
    .groups li:first-child { background: #ddd; }
  `];

  private fold(close: boolean, wide = false) {
    return html`<div class="fold ${wide ? "wide" : ""}">
      <svg viewBox="0 0 8 8">${close ? svg`<path d="M1 1l6 6M7 1L1 7" stroke="#8a8a8a" stroke-width="1.5"/>` : ""}</svg>
      <svg viewBox="0 0 8 8"><path d="M4 1v6L0 4zM8 1v6L4 4z" fill="#8a8a8a"/></svg>
    </div>`;
  }
  private col(names: string[], mid = false) {
    return html`<div class="col ${mid ? "mid" : ""}">${names.map((n) => tool(n, n === "dUp" || n === "dDown" ? "raised" : ""))}</div>`;
  }

  render() {
    return html`
      <section class="panel">
        <div class="grip dots"></div>
        <div class="logo"><svg viewBox="0 0 43 42">
          <path d="M0 0h42v5H0zM24 8h18v5H24zM24 17h18v5H24zM24 26h18v5H24zM14 36h28v5H14zM15 5h5v31h-5zM21 8h5v23h-5z" fill="#f6f6f6"/>
          <path d="M16 18Q2.500 16 2.500 28T16 38.500" fill="none" stroke="#f6f6f6" stroke-width="5"/><circle cx="12" cy="28" r="4" fill="none" stroke="#f6f6f6" stroke-width="3"/></svg></div>
        <button class="drop" aria-label="logo menu"><svg width="8" height="5" viewBox="0 0 8 5"><path d="M0 0h8L4 5z" fill="#8c8c8c"/></svg></button>
        ${this.fold(false, true)}
        <div class="big">
          <button class="picture" aria-label="stamp"><svg viewBox="0 0 28 28">${bigIcons.stamp}</svg></button>
          <div class="pair">${tool("rUndo", "")}${tool("rRedo", "")}</div>
        </div>
        ${this.col(["rCut", "rCopy", "rPaste"], true)}
        <div class="dark">
          <svg viewBox="0 0 52 35" fill="none" stroke="#aaa">
            <rect x="3.5" y="3.5" width="27" height="27"/><rect x="6.5" y="6.5" width="21" height="21" stroke-dasharray="1 1"/><rect x="9.5" y="9.5" width="15" height="15"/><rect x="12.5" y="12.5" width="9" height="9" stroke="#eee"/>
            <path d="M41.5 3v28M46.5 3v28" stroke-dasharray="1 1"/><path d="M44 3v28M42 3.5h4M42 30.5h4"/>
          </svg>
          <div class="stops">${icon("rStop")}${icon("rStop")}${icon("rStop")}</div>
        </div>
        ${this.col(["rZoom", "rOrbit", "rHand"], true)}
        <div class="views">
          <ul class="cjk">
            <li class="on">${icon("rTop")}俯视</li><li>${icon("rBottom")}仰视</li><li>${icon("rLeft")}左视</li>
          </ul>
          <div class="scroll">${["chevUp", "chevDown", "chevMenu"].map((n) => tool(n, ""))}</div>
        </div>
        ${this.col(["rEyeX", "rUp", "rEyeV"], true)}
      </section>
      <section class="panel">
        <div class="grip dots"></div>
        ${this.fold(true)}
        <div class="big">
          <button class="picture" aria-label="dimension"><svg viewBox="0 0 30 30">${bigIcons.dims}</svg></button>
          <div class="caption cjk">尺寸</div>
        </div>
        <div class="split"><div class="grip dots"></div><i></i></div>
        <div class="tiles">${tileIcons.map((t, i) => html`<button aria-label="dimension ${i + 1}"><svg viewBox="0 0 26 26">${t}</svg></button>`)}</div>
        <div class="split"><i></i><div class="grip dots"></div></div>
        <div class="words cjk">${["增补尺寸", "等式标注", "裁剪延伸"].map((t) => html`<button>${t}</button>`)}</div>
        ${this.col(["dEdit", "dOut", "dPin"])}${this.col(["dLink", "dIn", "dCheck"])}
        ${this.col(["dUp", "rStop", "dDown"])}${this.col(["dStack", "dUser", "dGear"])}
      </section>
      <section class="panel last">
        <div class="grip dots"></div>
        ${this.fold(true)}
        <div class="big">
          <button class="picture" aria-label="groups"><svg viewBox="0 0 28 28">${bigIcons.people}</svg></button>
          <div class="caption cjk">编组</div>
        </div>
        ${this.col(["gAdd", "gSub", "rUp"])}
        <ul class="groups cjk">${[1, 2, 3].map(() => html`<li>${icon("listItem")}编组</li>`)}</ul>
      </section>`;
  }
}

/* ---------- floating tool palette ---------- */

@customElement("tool-palette")
class ToolPalette extends LitElement {
  static styles = [shared, css`
    :host { display: block; width: 56px; background: #d4d4d4; border: 1px solid #333; border-bottom-width: 2px; }
    header { display: flex; align-items: center; gap: 6px; height: 11px; padding: 0 3px; background: #5a5a5a; }
    header .bar { width: 32px; height: 6px; background-image: conic-gradient(#111 25%, transparent 0); background-size: 2px 2px; }
    header button { margin-left: auto; width: 8px; height: 8px; }
    header svg { width: 8px; height: 8px; }
    .grip { height: 4px; margin: 4px 3px 0; }
    .fold { display: flex; align-items: center; gap: 4px; height: 8px; margin: 0 3px; }
    .fold i { flex: 1; height: 1px; background: #fff; }
    .grid { display: grid; grid-template-columns: 25px 25px; grid-auto-rows: 21px; padding: 2px 0 2px 1px; }
    .grid button { width: 25px; height: 21px; filter: drop-shadow(1px 1px 0 #b4b4b4); }
    .block { border-bottom: 2px solid #555; padding-top: 1px; }
    .block + .block { padding-top: 0; }
    .swatches { height: 56px; border-bottom: 1px solid #f4f4f4; margin: 0 1px; }
    .swatches > svg { display: block; width: 52px; height: 54px; }
    .two { padding-top: 1px; padding-bottom: 1px; }
  `];

  render() {
    const modify = ["gCopy", "gErase", "gCopy2", "gMove", "gArray", "gOffset", "gMirror", "gRotate", "gTrim", "gExtend", "gFillet", "gChamfer", "gScale", "gStretch", "gBreak1", "gBreak", "gAlignT", "gAlignL", "gList", "gLines", "gJoin", "gExplode"];
    const draw = ["gMline", "gLine", "gXline", "gPline", "gPoly", "gRect", "gArc", "gCircle", "gSpline", "gCloud", "gEarc", "gEllipse", "gMake", "gInsert", "gRegion", "gPoint", "gText", "gTextA", "gA", "gTable"];
    const fold = html`<div class="grip dots"></div><div class="fold"><i></i><svg width="7" height="4" viewBox="0 0 7 4"><path d="M0 4h7L3.5 0z" fill="#888"/></svg><i></i></div>`;
    return html`
      <header><div class="bar"></div><button aria-label="close"><svg viewBox="0 0 8 8"><path d="M1 1l6 6M7 1L1 7" stroke="#ddd" stroke-width="1.6"/></svg></button></header>
      <div class="block">${fold}<div class="grid">${modify.map((n) => tool(n, ""))}</div></div>
      <div class="block">
        <div class="grip dots"></div>
        <div class="swatches">
          <svg viewBox="0 0 52 54">
            <path d="M25 43h17V20h8v30H25z" fill="#d4d4d4" stroke="#fff" stroke-width="2"/>
            <path d="M27 49l4-4M31 49l4-4M35 49l4-4M39 49l3-3M43 40l5-5M43 35l5-5M43 30l5-5M43 45l5-5" stroke="#666"/>
            <path d="M43 44h5v5h-5z" fill="#777"/>
            <path d="M13 13h25v25H13z" fill="#48709c"/><path d="M13 13h17v19H13z" fill="#1c2f48" opacity=".7"/>
            <path d="M2 2h24v25H2z" fill="#bdbdbd" stroke="#fff" stroke-width="2"/>
            <path d="M3 8.5h22M3 13.5h22M3 18.5h22M3 23.5h22M8.5 4v4M20.5 4v4M14.5 9v4M8.5 14v4M20.5 14v4M14.5 19v4M8.5 24v3M20.5 24v3" stroke="#777"/>
            <path d="M43 6q4 0 4 5" fill="none" stroke="#222" stroke-width="1.5"/><path d="M40 6l4-3v6zM47 14l-3-4h6z" fill="#222"/>
            <g transform="translate(0 38)">${icons.rUp}</g>
          </svg>
        </div>
        <div class="grid two">${tool("gHatchA", "")}${tool("gHatchB", "")}</div>
      </div>
      ${fold}<div class="grid">${draw.map((n) => tool(n, ""))}</div>`;
  }
}

/* ---------- application window ---------- */

@customElement("app-root")
class AppRoot extends LitElement {
  static styles = [shared, css`
    :host { display: flex; flex-direction: column; position: relative; min-height: 100vh; overflow: hidden; background: #f2f2f2; color: #000; }
    .title {
      display: flex; align-items: center; gap: 4px; height: 24px; padding: 0 2px; margin: 0; color: #fff; font-weight: normal;
      background: linear-gradient(#000 1px, #6a6a6a 2px, #3e3e3e 9px, #222 10px, #222 23px, #000 23px);
    }
    .title .i16 { margin-bottom: 2px; }
    .label { display: flex; align-items: center; white-space: pre; }
    nav { display: flex; align-items: center; height: 20px; padding-left: 4px; background: #f0f0f0; }
    nav a { display: flex; align-items: center; margin: 0 6px; color: #000; text-decoration: none; }
    .bar { display: flex; align-items: center; overflow: hidden; background: linear-gradient(#fafafa, #ededed); border-bottom: 1px solid #a2a2a2; border-top: 2px solid #fdfdfd; }
    .one { height: 27px; padding-top: 2px; }
    .two { height: 29px; padding-top: 2px; border-bottom-color: #999; }
    .bar > * { flex: none; }
    .grip { width: 6px; height: 23px; border-left: 2px solid #c2c2c2; border-right: 2px solid #c2c2c2; margin: 0 4px 0 3px; }
    .tool { width: 23px; height: 20px; }
    .caret { width: 12px; height: 20px; }
    .set { display: flex; margin-right: 6px; }
    .end { width: 1px; height: 24px; background: #a2a2a2; margin: 0 2px 0 4px; }
    .combo { display: flex; align-items: center; height: 20px; border: 1px solid #000; outline: 1px solid #000; outline-offset: -2px; background: #fff; padding-left: 2px; }
    .combo select {
      flex: 1; align-self: stretch; min-width: 0; padding-left: 3px; color: #000;
      background: url("data:image/svg+xml,%3Csvg xmlns='http://www.w3.org/2000/svg' width='16' height='18'%3E%3Cpath d='M0 0h16v18H0z' fill='%23292929'/%3E%3Cpath d='M1 1h14v5H1z' fill='%23555'/%3E%3Cpath d='M4 8h8l-4 4z' fill='%23fff'/%3E%3C/svg%3E") right center no-repeat;
    }
    .space { width: 173px; } .space select { font-size: 11px; }
    .layer { width: 299px; } .style { width: 98px; } .color { width: 149px; } .bar > .rest { flex: 1 0 48px; }
    .rest select { background: none; }
    .layer .i16 { margin: 0 1px 0 0; }
    .box { width: 10px; height: 10px; border: 1px solid #000; margin-left: 1px; }
    .stroke { flex: 1; height: 1px; background: #000; margin-left: 2px; }
    .work { display: flex; flex: 1; padding-top: 1px; }
    .side { width: 25px; flex: none; background: #f2f2f2; }
    .draw { display: flex; flex-direction: column; align-items: center; padding: 2px 0 4px; border-bottom: 1px solid #b0b0b0; border-right: 1px solid #999; }
    .draw .lines { width: 20px; height: 6px; border-top: 1px solid #b4b4b4; border-bottom: 1px solid #b4b4b4; margin-bottom: 2px; }
    .draw button { width: 22px; height: 22px; }
    .main { display: flex; flex-direction: column; flex: 1; min-width: 0; margin-left: 2px; }
    .tabs { display: flex; height: 16px; background: linear-gradient(#9a9a9a, #8a8a8a 11px, #444 11px, #444 12px, #fff 12px); padding-left: 12px; border-bottom: 1px solid #000; }
    .tab { display: flex; align-items: center; justify-content: space-between; width: 144px; height: 15px; padding: 0 5px 0 10px; background: linear-gradient(#f2f2f2, #dedede); border-right: 1px solid #666; }
    .tab button { width: 9px; height: 9px; }
    .canvas { position: relative; flex: 1; border-top: 2px solid #777; border-left: 1px solid #888; background: #000; min-height: 680px; }
    .gap { height: 6px; background: #fff; }
    .cross { position: absolute; inset: 0; width: 100%; height: 100%; }
    .mark { position: absolute; right: 46px; bottom: 16px; width: 154px; height: 76px; overflow: visible; }
    .palette { position: absolute; left: 23px; top: 204px; }
    .arrow { position: absolute; left: 40px; top: 550px; width: 324px; height: 232px; }
  `];

  private menu(name: string, key: string) {
    return html`<a href="#"><span class="cjk">${name}</span>${key ? html`<span class="mono">(<u>${key}</u>)</span>` : ""}</a>`;
  }

  render() {
    const caret = (c: string) => html`<button class="caret" aria-label="history"><svg width="6" height="4" viewBox="0 0 6 4"><path d="M0 0h6L3 4z" fill=${c}/></svg></button>`;
    const set = (...n: string[]) => html`<div class="set">${n.map((x) => tool(x))}</div>`;
    return html`
      <h1 class="title">${icon("app")}<span class="label"><span class="mono">T20</span><span class="cjk">天正建筑软件</span><span class="mono"> V1.0 For AutoCAD 2007 - [Drawing1.dwg]</span></span></h1>
      <nav>${icon("doc")}${this.menu("文件", "F")}${this.menu("编辑", "E")}${this.menu("视图", "V")}${this.menu("插入", "I")}${this.menu("格式", "O")}${this.menu("工具", "T")}${this.menu("绘图", "D")}${this.menu("标注", "N")}${this.menu("修改", "M")}${this.menu("扩展工具", "")}${this.menu("窗口", "W")}${this.menu("帮助", "H")}</nav>
      <div class="bar one mono">
        <div class="grip"></div>
        ${set("fresh", "open", "save")}${set("print", "preview", "publish", "globe")}${set("cut", "copy", "paste", "brush", "block")}
        <div class="set">${tool("undo")}${caret("#1d3c78")}${tool("redo")}${caret("#b4b4b4")}</div>
        ${set("pan", "zoomRt", "zoomWin", "zoomPrev")}${set("props", "center", "palettes", "sheet", "markup", "calc")}
        ${tool("help")}
        <div class="end"></div><div class="grip"></div>
        ${tool("textStyle")}
        <div class="combo style"><select aria-label="Text style"><option>Standard</option></select></div>
        <div class="set"></div>
        ${tool("dimStyle")}
        <div class="combo rest"><select aria-label="Dimension style"><option>STANDARD</option></select></div>
      </div>
      <div class="bar two mono">
        <div class="grip"></div>
        <div class="combo space"><select aria-label="Workspace"><option>AutoCAD 经典</option></select></div>
        ${tool("gear")}${tool("house")}
        <div class="end"></div><div class="grip"></div>
        ${tool("layers")}
        <div class="combo layer">${icon("bulb")}${icon("sun")}${icon("sunVp")}${icon("lock")}<span class="box"></span><select aria-label="Layer"><option>0</option></select></div>
        ${tool("layerPrev")}${tool("layerState")}
        <div class="end"></div><div class="grip"></div>
        <div class="combo color"><span class="box"></span><select aria-label="Color"><option>ByLayer</option></select></div>
        <div class="set"></div>
        <div class="combo rest"><span class="stroke"></span></div>
      </div>
      <div class="work">
        <aside class="side"><div class="draw"><div class="lines"></div>
          ${["line", "xline", "pline", "poly", "rect", "arc", "circle", "cloud", "spline", "ellipse", "earc", "insert", "make", "point", "hatch", "gradient", "region", "table", "mtext"].map((n) => tool(n, ""))}
        </div></aside>
        <main class="main">
          <cad-ribbon></cad-ribbon>
          <div class="tabs"><div class="tab mono">Drawing1.dwg<button aria-label="close tab"><svg width="9" height="9" viewBox="0 0 9 9"><path d="M1 1l7 7M8 1L1 8" stroke="#333" stroke-width="1.2"/></svg></button></div></div>
          <div class="gap"></div>
          <div class="canvas">
            <svg class="cross" stroke="#fff" fill="none" shape-rendering="crispEdges">
              <path d="M575.5 0V2000M0 581.5H2000M555.5 561.5h40v40h-40z"/>
              <path d="M17 609l7.5 10 7.5-10M24.5 619v9M22.5 640l-7 18.5h14zM22.5 659v200M20.500 650v8M24.500 650v8" shape-rendering="auto"/>
            </svg>
            <svg class="mark" viewBox="0 0 154 76" fill="#b8b8b8">
              <text x="1" y="47" font-family="Liberation Sans" font-weight="bold" font-size="33">Bai</text>
              <ellipse cx="59" cy="19" rx="5.500" ry="7.500"/><ellipse cx="70" cy="9" rx="5" ry="7.500"/><ellipse cx="83" cy="10" rx="5.500" ry="7.500"/><ellipse cx="91.500" cy="22.500" rx="5.500" ry="7.500"/>
              <path d="M75 20q6 0 10 7 10 7 9 14-1 8-10 7-9-2-18 0-9 1-10-7 0-7 9-14 4-7 10-7z"/>
              <text x="64" y="43" font-family="Liberation Sans" font-weight="bold" font-size="20" fill="#000">du</text>
              <text x="99" y="46" font-family="Noto Sans CJK SC" font-weight="bold" font-size="26">经验</text>
              <text x="2" y="68" font-family="Open Sans" font-weight="600" font-size="17">jingyan.baidu.com</text>
            </svg>
          </div>
        </main>
      </div>
      <tool-palette class="palette"></tool-palette>
      <svg class="arrow" viewBox="0 0 324 232"><path d="M320 7L20 210l-4-4L3 227l24-4-2-5z" fill="#ff3b3b"/></svg>`;
  }
}
